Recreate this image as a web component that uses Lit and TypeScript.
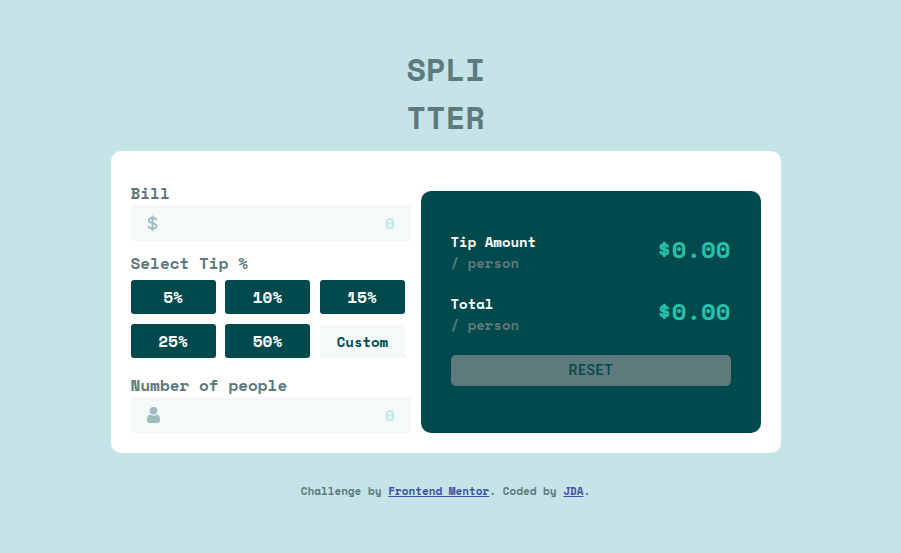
import { LitElement, html, css } from "lit";
import { customElement, state } from "lit/decorators.js";

@customElement("app-root")
export class AppRoot extends LitElement {
  @state() private tips = [5, 10, 15, 25, 50];
  @state() private results = ["Tip Amount", "Total"];

  static styles = css`
    :host {
      display: block;
      box-sizing: border-box;
      height: 553px;
      padding: 45px 10px 0 0;
      background: #c5e4e7;
      color: #5e7a7d;
      font-family: "Space Mono", "Liberation Mono", monospace;
      font-weight: 700;
      overflow: hidden;
    }
    * { box-sizing: border-box; }
    h1 {
      margin: 0 auto;
      width: 78px;
      height: 106px;
      font-size: 32px;
      line-height: 48px;
      white-space: nowrap;
    }
    .card {
      display: grid;
      grid-template-columns: 280px 340px;
      gap: 10px;
      width: 670px;
      height: 302px;
      margin: 0 auto;
      padding: 20px;
      background: #fff;
      border-radius: 10px;
    }
    .form { padding-top: 10px; }
    .label {
      height: 24px;
      font-size: 16px;
      line-height: 24px;
    }
    .field {
      display: flex;
      align-items: center;
      justify-content: space-between;
      height: 36px;
      padding: 0 16px;
      background: #f4fafa;
      color: #c5e4e7;
      font-size: 16px;
    }
    .field svg { display: block; }
    .field span { line-height: 36px; }
    .tip { margin-top: 10px; }
    .tips {
      display: grid;
      grid-template-columns: 85px 85px 85px;
      column-gap: 9.5px;
      row-gap: 10px;
      margin: 5px 0 15px;
    }
    .choice {
      height: 34px;
      border-radius: 3px;
      background: #00494d;
      color: #fff;
      text-align: center;
      font-size: 16px;
      line-height: 34px;
    }
    .custom {
      height: 33px;
      margin-top: 1px;
      padding-left: 1px;
      background: #f4fafa;
      color: #00494d;
      border-radius: 0;
      font-size: 14px;
      line-height: 34px;
    }
    .panel {
      height: 242px;
      margin-top: 20px;
      padding: 40px 30px 0;
      background: #00494d;
      border-radius: 10px;
    }
    .row {
      display: flex;
      justify-content: space-between;
      height: 42px;
      margin-bottom: 20px;
      font-size: 14px;
      line-height: 21px;
    }
    .name { color: #fff; }
    .amount {
      color: #26c0ab;
      font-size: 24px;
      line-height: 36px;
    }
    .reset {
      height: 31px;
      padding-left: 1px;
      border-radius: 5px;
      background: #5e7a7d;
      color: #00494d;
      text-align: center;
      font: 500 14px/31px Roboto, sans-serif;
      letter-spacing: 0.6px;
    }
    footer {
      margin-top: 30px;
      text-align: center;
      font-size: 11px;
      line-height: 16px;
    }
    footer a { color: #3e52a3; text-decoration: underline; }
  `;

  render() {
    return html`
      <h1>SPLI<br />TTER</h1>
      <main class="card">
        <section class="form">
          <div class="label">Bill</div>
          <div class="field">
            <svg width="11" height="17" viewBox="-.5 -.3 12 18" fill="none" stroke="#9ebbbd" stroke-width="2">
              <path d="M5.5 0V17M9.6 5.2C9.4 3.6 7.7 2.7 5.5 2.7C3.1 2.7 1.4 3.7 1.4 5.4C1.4 7.3 3.2 7.8 5.5 8.3C8 8.8 9.8 9.5 9.8 11.4C9.8 13.2 8 14.3 5.5 14.3C3 14.3 1.2 13.2 1 11.3" />
            </svg>
            <span>0</span>
          </div>
          <div class="label tip">Select Tip %</div>
          <div class="tips">
            ${this.tips.map((t) => html`<div class="choice">${t}%</div>`)}
            <div class="choice custom">Custom</div>
          </div>
          <div class="label">Number of people</div>
          <div class="field">
            <svg width="13" height="16" viewBox="0 0 13 16" fill="#9ebbbd">
              <ellipse cx="6.5" cy="3.7" rx="3.8" ry="3.8" />
              <path d="M3.3 7.5C4.2 8.3 5.3 8.7 6.5 8.7S8.8 8.3 9.7 7.5C12.2 7.7 13 10.4 13 13.2C13 15 12 16 10.3 16H2.7C1 16 0 15 0 13.2C0 10.4 .8 7.7 3.3 7.5Z" />
            </svg>
            <span>0</span>
          </div>
        </section>
        <section class="panel">
          ${this.results.map(
            (name) => html`<div class="row">
              <div><div class="name">${name}</div><div>/ person</div></div>
              <div class="amount">$0.00</div>
            </div>`
          )}
          <div class="reset">RESET</div>
        </section>
      </main>
      <footer>Challenge by <a>Frontend Mentor</a>. Coded by <a>JDA</a>.</footer>
    `;
  }
}
